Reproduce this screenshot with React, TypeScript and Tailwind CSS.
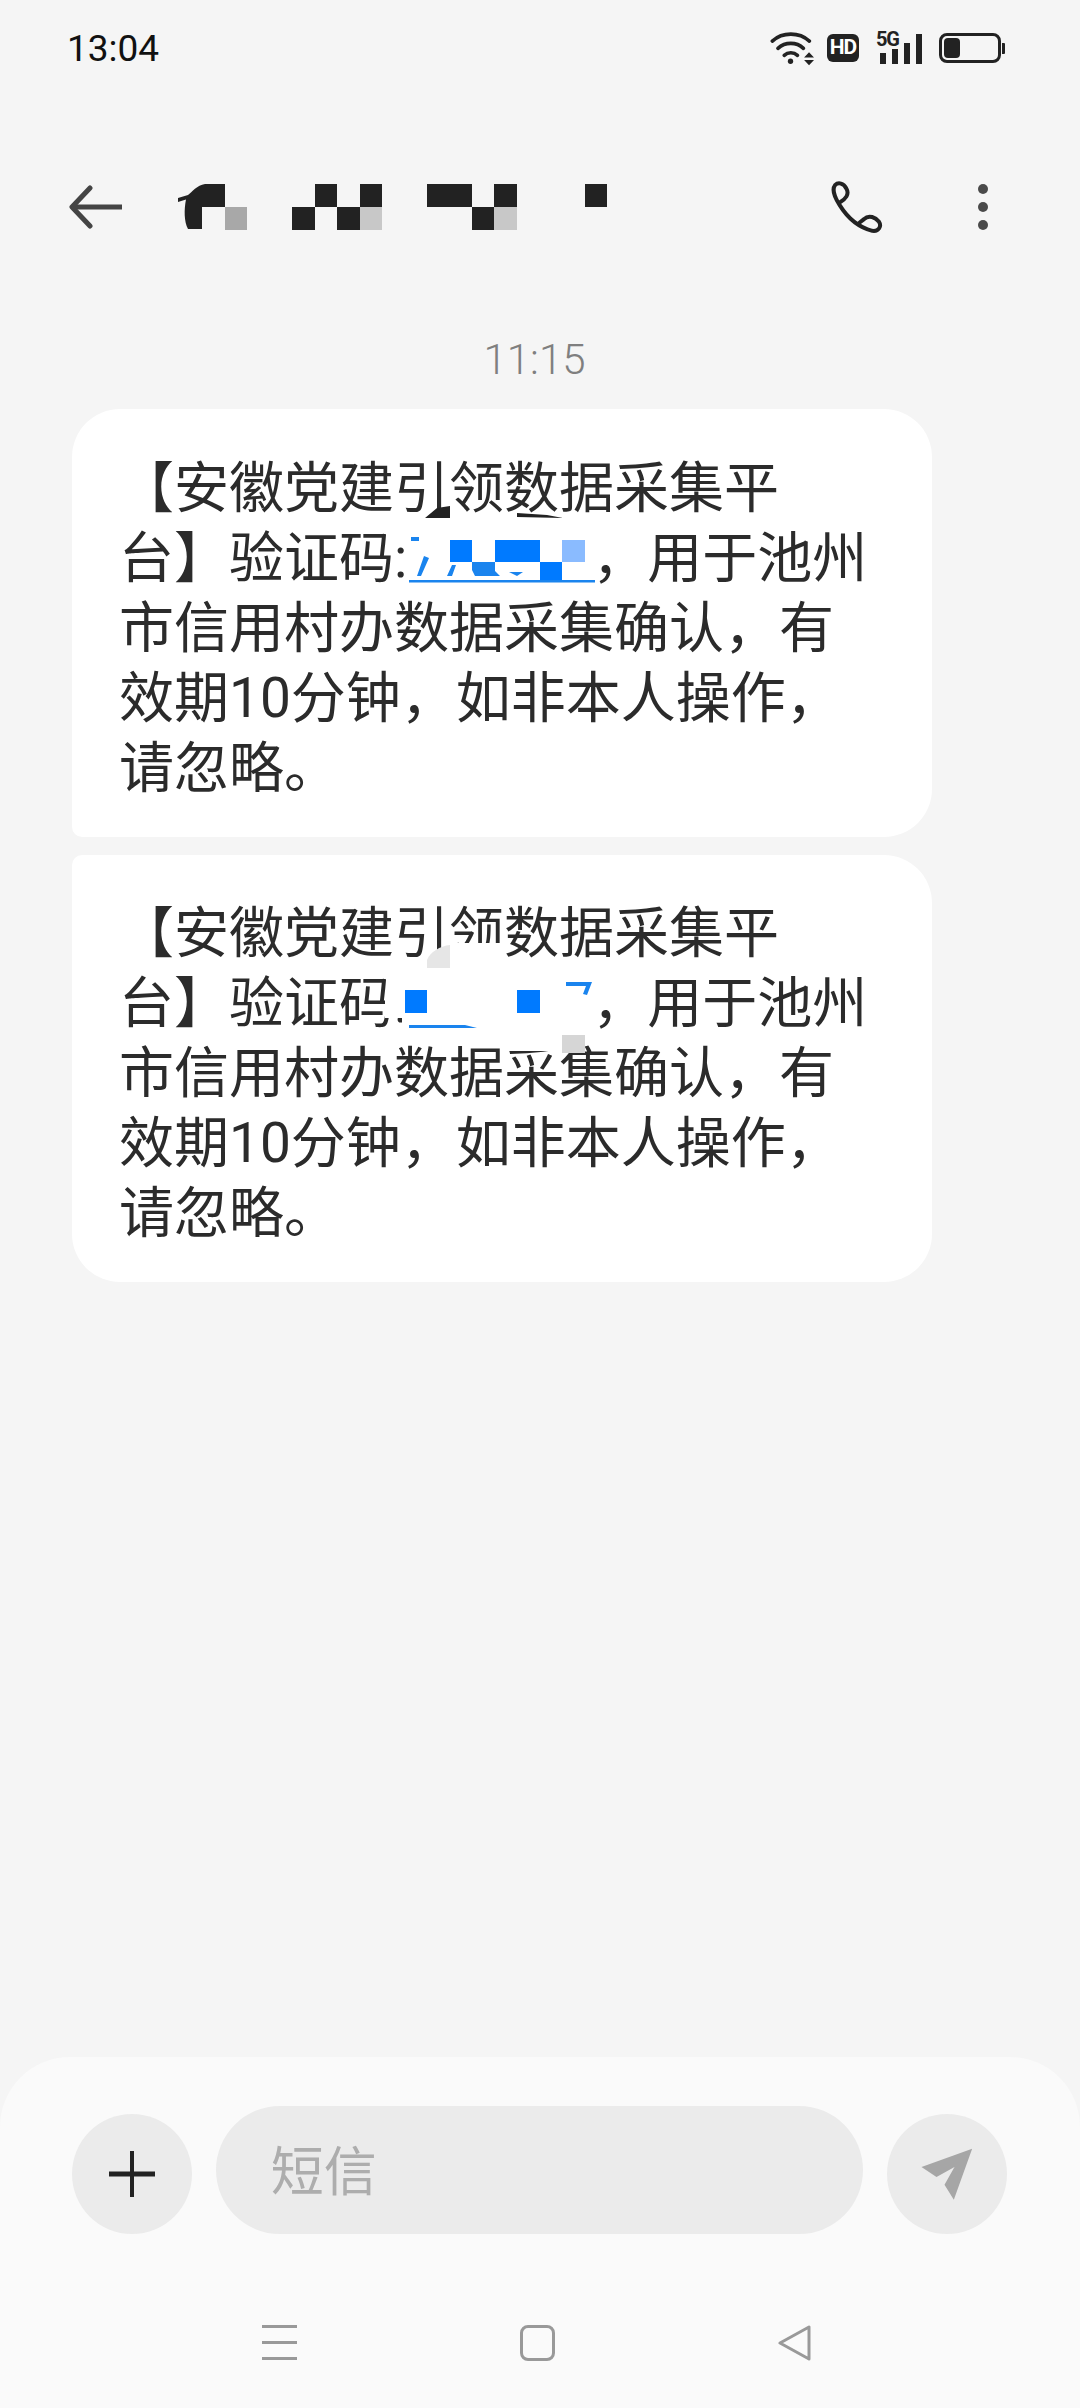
const bodyFont = "font-['Roboto','Noto_Sans_CJK_SC',sans-serif]";

function WifiIcon() {
  return (
    <svg width="45" height="35" viewBox="62 60 136 105" fill="none" stroke="#222" strokeWidth="11" strokeLinecap="round">
      <path d="M69 90 C 100 62 150 62 181 90" />
      <path d="M86 112 C 108 92 142 92 163 112" />
      <path d="M105 133 C 116 123 134 123 145 133" />
      <circle cx="124" cy="151" r="8" fill="#222" stroke="none" />
      <path d="M180 124 L195 140 L165 140 Z M165 147 L195 147 L180 163 Z" fill="#222" stroke="none" />
    </svg>
  );
}

function SignalIcon() {
  return (
    <div className="relative flex h-[31px] w-[46px] items-end justify-end gap-[6px]">
      <span className="absolute left-0 top-[-4px] text-[20px] font-bold leading-[20px] tracking-[-1.2px] text-[#222]">5G</span>
      <div className="h-[11px] w-[6px] bg-[#222]" />
      <div className="h-[15px] w-[6px] bg-[#222]" />
      <div className="h-[21px] w-[6px] bg-[#222]" />
      <div className="h-[30px] w-[6px] bg-[#222]" />
    </div>
  );
}

function Battery() {
  return (
    <div className="flex items-center gap-[1px]">
      <div className="h-[30px] w-[62px] rounded-[8px] border-[3px] border-[#222] p-[2px]">
        <div className="h-full w-[16px] rounded-[4px] bg-[#222]" />
      </div>
      <div className="h-[11px] w-[3px] rounded-r-[1px] bg-[#222]" />
    </div>
  );
}

function StatusBar() {
  return (
    <div className="flex h-[96px] items-center pl-[67px] pr-[75px]">
      <span className="mt-[2px] text-[37px] leading-[44px] text-[#111]">13:04</span>
      <div className="ml-auto flex items-center">
        <WifiIcon />
        <div className="ml-[12px] flex h-[28px] w-[32px] items-center justify-center rounded-[6px] bg-[#222] text-[21px] font-bold tracking-[-1px] text-white">HD</div>
        <div className="ml-[17px]"><SignalIcon /></div>
        <div className="ml-[17px]"><Battery /></div>
      </div>
    </div>
  );
}

// name is pixelated in the screenshot
function NameMosaic() {
  return (
    <svg width="430" height="46" viewBox="178 180 430 46" className="ml-[54px]">
      <path d="M178 194 L178 198 L186 195.5 C 184 205 184 218 188 225 L202 225 L202 203 L225 203 L225 180 L205 180 C 197 181 192 188 188 191 Z" fill="#222" />
      <rect x="225" y="203" width="22" height="23" fill="#a8a8a8" />
      <rect x="315" y="180" width="22" height="23" fill="#222" />
      <rect x="360" y="180" width="22" height="23" fill="#222" />
      <rect x="292" y="203" width="23" height="23" fill="#222" />
      <rect x="337" y="203" width="23" height="23" fill="#222" />
      <rect x="360" y="203" width="22" height="23" fill="#c8c8c8" />
      <rect x="427" y="180" width="45" height="23" fill="#222" />
      <rect x="494" y="180" width="23" height="23" fill="#222" />
      <rect x="472" y="203" width="22" height="23" fill="#222" />
      <rect x="494" y="203" width="23" height="23" fill="#c8c8c8" />
      <rect x="585" y="180" width="22" height="23" fill="#222" />
    </svg>
  );
}

function Header() {
  return (
    <div className="flex h-[222px] items-center pl-[69px] pr-[92px]">
      <svg width="55" height="44" viewBox="69 185 55 44" fill="none" stroke="#444" strokeWidth="5" strokeLinejoin="round">
        <path d="M90 188 L72 207 L90 226" strokeLinecap="round" />
        <path d="M72 207 L122 207" />
      </svg>
      <NameMosaic />
      <svg width="52" height="53" viewBox="36 46 156 158" className="ml-auto" fill="none" stroke="#222" strokeWidth="12" strokeLinecap="round">
        <path d="M62 110 C 80 100 92 85 82 68 C 74 52 58 48 48 58 C 40 68 44 90 62 118 C 85 155 120 185 160 195 C 180 198 188 180 180 168 C 170 155 150 145 135 160 L 122 170" />
      </svg>
      <div className="ml-[95px] flex flex-col gap-[8px]">
        <div className="size-[10px] rounded-full bg-[#4a4a4a]" />
        <div className="size-[10px] rounded-full bg-[#4a4a4a]" />
        <div className="size-[10px] rounded-full bg-[#4a4a4a]" />
      </div>
    </div>
  );
}

function MessageText() {
  return (
    <>
      <div>【安徽党建引领数据采集平</div>
      <div>台】验证码:<span className="inline-block w-[185px]" />，用于池州</div>
      <div>市信用村办数据采集确认，有</div>
      <div>效期10分钟，如非本人操作，</div>
      <div>请忽略。</div>
    </>
  );
}

function FirstBubble() {
  return (
    <div className="relative h-[428px] w-[860px] rounded-[48px] rounded-bl-[10px] bg-white pl-[47px] pt-[44px] text-[55px] leading-[70px] text-[#2b2b2b] whitespace-nowrap">
      <MessageText />
      {/* pixelated code */}
      <svg width="860" height="428" viewBox="72 409 860 428" className="absolute inset-0">
        <path d="M425 518 L437 508 L450 506 L450 518 Z M517 513 L547 515 L563 518 L517 517 Z" fill="#222" />
        <rect x="411" y="537" width="8" height="4" fill="#1a84ee" />
        <path d="M417 576 L424 556 L429 558 L421 576 Z M447 576 L452 565 L456 565 L452 576 Z M472 562 L495 562 L495 571 L500 576 L475 576 L472 570 Z M509 572 L523 572 L517 576 Z" fill="#1a84ee" />
        <rect x="450" y="540" width="22" height="22" fill="#007aff" />
        <rect x="495" y="540" width="45" height="22" fill="#007aff" />
        <rect x="540" y="562" width="22" height="18" fill="#007aff" />
        <rect x="562" y="540" width="23" height="22" fill="#8abbff" />
        <rect x="409" y="580" width="186" height="2.5" fill="#1a84ee" />
      </svg>
    </div>
  );
}

function SecondBubble() {
  return (
    <div className="relative mt-[18px] h-[427px] w-[860px] rounded-[48px] rounded-tl-[10px] bg-white pl-[47px] pt-[43px] text-[55px] leading-[70px] text-[#2b2b2b] whitespace-nowrap">
      <MessageText />
      {/* pixelated code, white patches hide parts of the text around it */}
      <svg width="860" height="427" viewBox="72 855 860 427" className="absolute inset-0">
        <path d="M450 943 L505 943 L505 975 L598 975 L598 1040 L585 1040 L585 1051 L500 1051 L500 1040 L402 1040 L402 1018 L385 1018 L385 990 L402 990 L402 975 L427 975 L427 960 L450 945 Z" fill="#fff" />
        <path d="M427 968 L427 960 C 430 952 440 946 450 945 L450 968 Z" fill="#e6e6e6" />
        <rect x="405" y="990" width="22" height="23" fill="#007aff" />
        <rect x="517" y="990" width="23" height="23" fill="#007aff" />
        <path d="M566 982 L592 982 L587 995 L583 994 L586 986 L566 986 Z" fill="#1a84ee" />
        <path d="M409 1025 L465 1025 L477 1028 L409 1028 Z" fill="#1a84ee" />
        <rect x="562" y="1035" width="23" height="18" fill="#d6d6d6" />
      </svg>
    </div>
  );
}

function Composer() {
  return (
    <div className="mt-auto h-[351px] rounded-t-[70px] bg-[#fafafa]">
      <div className="flex items-center pl-[72px] pr-[73px] pt-[49px]">
        <button className="mt-[8px] flex size-[120px] items-center justify-center rounded-full bg-[#ebebeb]">
          <svg width="46" height="46" viewBox="0 0 46 46" stroke="#222">
            <path d="M0 23 L46 23" strokeWidth="5" />
            <path d="M23 0 L23 46" strokeWidth="4" />
          </svg>
        </button>
        <div className="ml-[24px] flex h-[128px] w-[648px] items-center rounded-full bg-[#ebebeb] pl-[55px] pt-[8px] text-[53px] text-[#adadad]">短信</div>
        <button className="ml-[24px] mt-[8px] flex size-[120px] items-center justify-center rounded-full bg-[#ebebeb]">
          <svg width="52" height="52" viewBox="122 148 155 156" fill="#a6a6a6">
            <path d="M275 150 L220 303 L192 258 L222 205 L168 235 L123 205 Z" />
          </svg>
        </button>
      </div>
      <div className="mt-[90px] flex items-center pl-[262px]">
        <div className="flex h-[37px] w-[35px] flex-col justify-between py-[1px]">
          <div className="h-[3px] bg-[#999]" />
          <div className="h-[3px] bg-[#999]" />
          <div className="h-[3px] bg-[#999]" />
        </div>
        <div className="ml-[223px] h-[36px] w-[35px] rounded-[8px] border-[3px] border-[#999]" />
        <svg width="34" height="36" viewBox="0 0 34 36" className="ml-[223px]" fill="none" stroke="#999" strokeWidth="3" strokeLinejoin="round">
          <path d="M31 2 L31 34 L2 18 Z" />
        </svg>
      </div>
    </div>
  );
}

export default function App() {
  return (
    <div className={`flex h-[2408px] w-[1080px] flex-col overflow-hidden bg-[#f5f5f5] ${bodyFont}`}>
      <StatusBar />
      <Header />
      <div className="mb-[8px] flex h-[83px] items-center justify-center pr-[11px] text-[42px] font-light text-[#7f7f7f]">11:15</div>
      <div className="pl-[72px]">
        <FirstBubble />
        <SecondBubble />
      </div>
      <Composer />
    </div>
  );
}
